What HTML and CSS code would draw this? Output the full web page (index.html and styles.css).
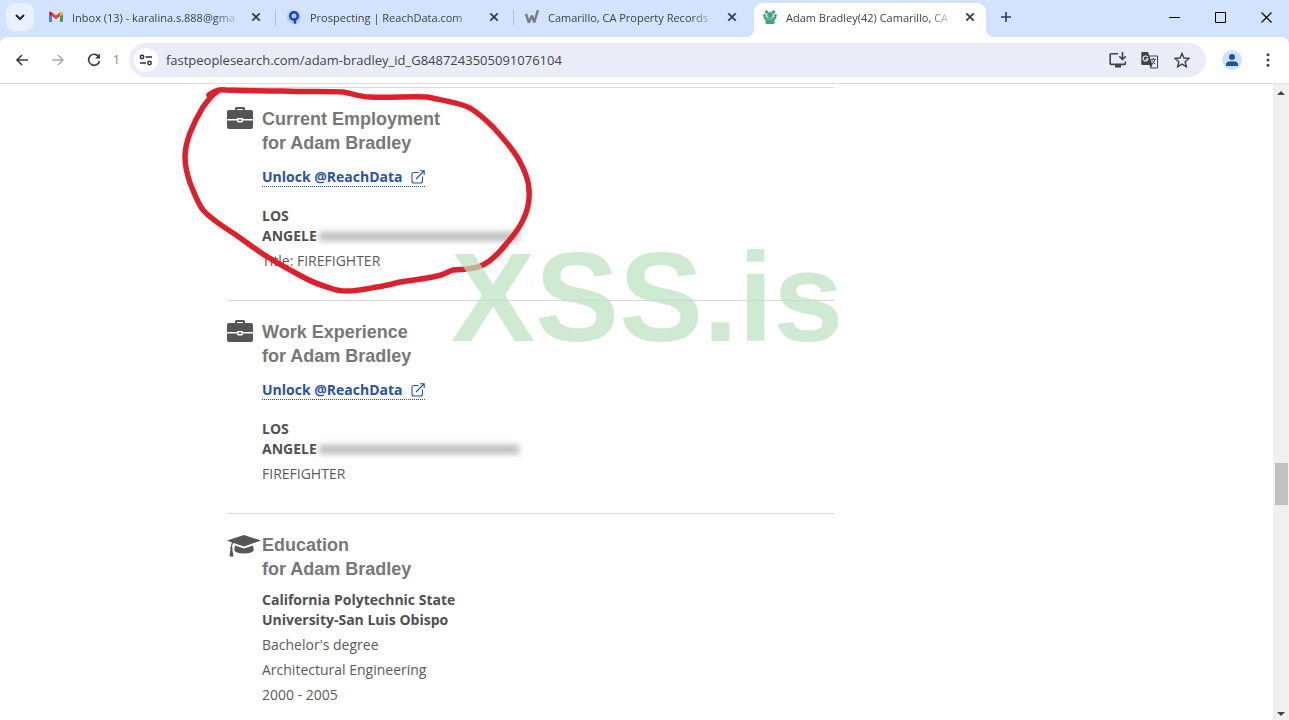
FILE: index.html
```html
<!DOCTYPE html>
<html lang="en">
<head>
<meta charset="utf-8">
<title>Adam Bradley(42) Camarillo, CA</title>
<link rel="stylesheet" href="styles.css">
</head>
<body>
<svg class="defs" width="0" height="0" aria-hidden="true">
  <symbol id="x" viewBox="0 0 10 10"><path d="M1.3 1.3l7.4 7.4M8.7 1.3L1.3 8.7" fill="none" stroke="currentColor" stroke-width="1.7"/></symbol>
  <symbol id="case" viewBox="0 0 26 22"><path fill="currentColor" fill-rule="evenodd" d="M8 3V1.500Q8 0 9.500 0h7Q18 0 18 1.500V3h6q2 0 2 2v7H16v-1h-6v1H0V5q0-2 2-2zM10 3h6V2h-6zM0 13.500h10V14q0 1.500 1.500 1.500h3Q16 15.500 16 14v-.5h10V20q0 2-2 2H2q-2 0-2-2zM11.500 12.500h3v1.500h-3z"/></symbol>
  <symbol id="ext" viewBox="0 0 14 14"><path d="M7.500 2.500H3Q1 2.500 1 4.500V11q0 2 2 2h6.500q2 0 2-2V6.500M5 9l8-8M9 .8h4.200V5" fill="none" stroke="currentColor" stroke-width="1.100"/></symbol>
</svg>
<header class="browser">
  <div class="tabbar">
    <button class="tab-search" aria-label="Search tabs"><svg width="10" height="7" viewBox="0 0 10 7"><path d="M1 1l4 4 4-4" fill="none" stroke="#1f2430" stroke-width="2"/></svg></button>
    <nav class="tabs">
      <div class="tab">
        <svg class="favicon" viewBox="0 0 14 14"><path fill="#4285f4" d="M0 3.500l3 2.200V12H1q-1 0-1-1z"/><path fill="#34a853" d="M11 5.700l3-2.200V11q0 1-1 1h-2z"/><path fill="#ea4335" d="M3 2.500l4 3 4-3v3.800L7 9.300 3 6.300z"/><path fill="#c5221f" d="M0 3.500Q0 1 2 1.700l1 .8v3.800L0 4.500z"/><path fill="#fbbc04" d="M14 3.500Q14 1 12 1.700l-1 .8v3.800l3-1.800z"/></svg>
        <a class="title" href="#">Inbox (13) - karalina.s.888@gma</a>
        <button class="close" aria-label="Close tab"><svg width="10" height="10"><use href="#x"/></svg></button>
      </div>
      <div class="tab">
        <svg class="favicon" viewBox="0 0 14 14"><circle cx="7" cy="7" r="7" fill="#a9cdf8"/><circle cx="7" cy="6" r="3.800" fill="none" stroke="#2049a5" stroke-width="2.600"/><path d="M8 8v5.700" stroke="#2049a5" stroke-width="2.400"/></svg>
        <a class="title" href="#">Prospecting | ReachData.com</a>
        <button class="close" aria-label="Close tab"><svg width="10" height="10"><use href="#x"/></svg></button>
      </div>
      <div class="tab">
        <svg class="favicon" viewBox="0 0 14 14"><path d="M1 4l2.800 8.500L7 5.500l2.200 7L13 0" fill="none" stroke="#777b84" stroke-width="2.400" stroke-linejoin="bevel"/></svg>
        <a class="title" href="#">Camarillo, CA Property Records</a>
        <button class="close" aria-label="Close tab"><svg width="10" height="10"><use href="#x"/></svg></button>
      </div>
      <div class="tab active">
        <svg class="favicon" viewBox="0 0 14 14" fill="#43a583"><circle cx="3.500" cy="2" r="1.800"/><circle cx="10.500" cy="2" r="1.800"/><circle cx="1.600" cy="5.500" r="1.600"/><circle cx="12.400" cy="5.500" r="1.600"/><circle cx="7" cy="4.800" r="2.900"/><path d="M1.500 6l3 1.500h5l3-1.500 1 2.500-2 1.500v3q0 1-1 1h-7q-1 0-1-1v-3l-2-1.500z"/><path d="M3.500 8.500q3.500 1.600 7 0" fill="none" stroke="#b5dfce" stroke-width=".6"/></svg>
        <a class="title" href="#">Adam Bradley(42) Camarillo, CA</a>
        <button class="close" aria-label="Close tab"><svg width="10" height="10"><use href="#x"/></svg></button>
      </div>
    </nav>
    <button class="new-tab" aria-label="New tab"><svg width="12" height="12" viewBox="0 0 12 12"><path d="M6 1v10M1 6h10" stroke="#33394a" stroke-width="1.600"/></svg></button>
    <div class="window-controls">
      <button aria-label="Minimize"><svg width="11" height="11" viewBox="0 0 11 11"><path d="M0 5.500h11" stroke="#000"/></svg></button>
      <button aria-label="Maximize"><svg width="11" height="11" viewBox="0 0 11 11"><path d="M.5 .5h10v10H.5z" fill="none" stroke="#000"/></svg></button>
      <button aria-label="Close"><svg width="11" height="11" viewBox="0 0 11 11"><path d="M.5 .5l10 10M10.500 .5l-10 10" stroke="#000" stroke-width="1.200"/></svg></button>
    </div>
  </div>
  <div class="toolbar">
    <button class="tool" aria-label="Back"><svg width="14" height="12" viewBox="0 0 14 12"><path d="M13 6H2M7 1L2 6l5 5" fill="none" stroke="#3c4043" stroke-width="1.700"/></svg></button>
    <button class="tool" aria-label="Forward"><svg width="14" height="12" viewBox="0 0 14 12"><path d="M1 6h11M7 1l5 5-5 5" fill="none" stroke="#a9abae" stroke-width="1.500"/></svg></button>
    <button class="tool" aria-label="Reload"><svg width="14" height="14" viewBox="0 0 14 14"><path d="M12 4.200A5.500 5.500 0 1 0 12.500 8" fill="none" stroke="#3c4043" stroke-width="1.700"/><path d="M13 .5v5H8z" fill="#3c4043"/></svg></button>
    <span class="count">1</span>
    <div class="omnibox">
      <button class="site-info" aria-label="Site information"><svg width="14" height="12" viewBox="0 0 14 12"><g fill="none" stroke="#2d3033" stroke-width="1.500"><circle cx="3" cy="3" r="1.700"/><path d="M6.500 3H13M1 9h6"/><circle cx="10.500" cy="9" r="1.700"/></g></svg></button>
      <input class="url" type="text" aria-label="Address" value="fastpeoplesearch.com/adam-bradley_id_G8487243505091076104">
      <button class="action" aria-label="Install"><svg width="18" height="16" viewBox="0 0 18 16"><path d="M9 1.800H2q-.8 0-.8.8v9q0 .8.8.8h13.500q.8 0 .8-.8V9.500" fill="none" stroke="#41454a" stroke-width="1.600"/><path d="M6 13h6v2.500H6z" fill="#41454a"/><path d="M13.500 0v7M10.300 4.300l3.200 3.200 3.200-3.200" fill="none" stroke="#41454a" stroke-width="1.600"/></svg></button>
      <button class="action" aria-label="Translate"><svg width="18" height="17" viewBox="0 0 18 17"><path d="M1.500 0H7l1.200 3.500H16q1 0 1 1V15.500q0 1-1 1H9.500L8.500 13H1.500q-1.200 0-1.200-1.200V1.200Q.3 0 1.500 0z" fill="#41454a"/><path d="M8.600 4.500H15.500q.5 0 .5.5v10q0 .5-.5.5H10l1.500-2.500z" fill="#eaedf7"/><path d="M6.800 5.300A2.500 2.500 0 1 0 7 7.200H4.800" fill="none" stroke="#eaedf7" stroke-width="1.200"/><path d="M10 7.300h5M12.300 6v1.300M14 7.500q-.8 3.200-3 4.500M11 8.500q1.200 2.300 3.200 3.600" fill="none" stroke="#41454a"/></svg></button>
      <button class="action" aria-label="Bookmark"><svg width="16" height="16" viewBox="0 0 16 16"><path d="M8 1.500l2 4.500 5 .5-3.800 3.300 1.100 4.900L8 12.100l-4.300 2.600 1.100-4.900L1 6.500 6 6z" fill="none" stroke="#41454a" stroke-width="1.500"/></svg></button>
    </div>
    <button class="profile" aria-label="Profile"><svg width="12" height="12" viewBox="0 0 12 12" fill="#1b55a5"><circle cx="6" cy="3" r="3"/><path d="M0 12V10q0-2.800 6-2.800T12 10v2z"/></svg></button>
    <button class="more" aria-label="Menu"><svg width="4" height="14" viewBox="0 0 4 14" fill="#41454a"><circle cx="2" cy="1.800" r="1.500"/><circle cx="2" cy="7" r="1.500"/><circle cx="2" cy="12.200" r="1.500"/></svg></button>
  </div>
</header>
<div class="viewport">
  <main class="page">
    <div class="details">
      <section class="record">
        <svg class="icon" viewBox="0 0 26 22"><use href="#case"/></svg>
        <div class="body">
          <h2>Current Employment<br>for Adam Bradley</h2>
          <a class="unlock" href="#">Unlock @ReachData <svg width="14" height="14"><use href="#ext"/></svg></a>
          <p class="name">LOS<br>ANGELE<span class="redacted"></span></p>
          <p class="line">Title: FIREFIGHTER</p>
        </div>
      </section>
      <section class="record">
        <svg class="icon" viewBox="0 0 26 22"><use href="#case"/></svg>
        <div class="body">
          <h2>Work Experience<br>for Adam Bradley</h2>
          <a class="unlock" href="#">Unlock @ReachData <svg width="14" height="14"><use href="#ext"/></svg></a>
          <p class="name">LOS<br>ANGELE<span class="redacted"></span></p>
          <p class="line">FIREFIGHTER</p>
        </div>
      </section>
      <section class="record education">
        <svg class="icon cap" viewBox="0 0 34 22"><path fill="currentColor" d="M0 5.500L17 0l17 5.500L17 11.500 6.500 8Q5 9 5 12q1 .8.300 2L6.500 21.500H2.500L3.500 14q-.8-1.200.3-2Q4 9 5 7.500zM8 10.500l9 3 9-3 .8 5q-2 3-9.800 3T7.200 15.500z"/></svg>
        <div class="body">
          <h2>Education<br>for Adam Bradley</h2>
          <p class="name">California Polytechnic State<br>University-San Luis Obispo</p>
          <p class="line">Bachelor's degree</p>
          <p class="line">Architectural Engineering</p>
          <p class="line">2000 - 2005</p>
        </div>
      </section>
      <svg class="scribble" width="360" height="220" viewBox="180 84 360 220" aria-hidden="true"><path d="M209 95C214 91 219 89 226 90C255 91 270 91 283 91C305 92 325 91 343 92C355 94 360 97 370 97C390 98 410 96 427 97C445 101 458 102 470 108C478 113 485 119 493 127C504 139 513 149 519 160C525 171 529 180 529 190C530 202 528 210 523 220C519 229 514 235 507 243C500 252 493 260 483 265C473 270 463 269 453 270C447 272 443 275 437 276C425 279 412 280 400 282C392 284 385 286 377 287C366 289 357 291 347 291C341 291 335 290 330 288C320 285 312 282 303 277C288 269 273 261 260 252C251 246 242 239 233 233C222 226 211 219 203 210C197 202 194 192 190 183C187 174 185 166 185 157C185 148 187 141 190 133C194 123 198 115 203 107C208 100 212 95 218 91" fill="none" stroke="#dc212c" stroke-width="5.500" stroke-linecap="round" stroke-linejoin="round"/></svg>
      <div class="watermark">XSS.is</div>
    </div>
  </main>
  <div class="scrollbar" aria-hidden="true">
    <svg width="8" height="4" viewBox="0 0 8 4"><path d="M0 4l4-4 4 4z" fill="#444"/></svg>
    <div class="track"><div class="thumb"></div></div>
    <svg width="8" height="4" viewBox="0 0 8 4"><path d="M0 0l4 4 4-4z" fill="#444"/></svg>
  </div>
</div>
</body>
</html>
```
FILE: styles.css
```css
* { box-sizing: border-box; }
body {
  margin: 0;
  height: 100vh;
  display: flex;
  flex-direction: column;
  overflow: hidden;
  background: #fff;
  color: #5a5a5a;
  font: 14px/20px "Open Sans", "Noto Sans", sans-serif;
}
.defs { position: absolute; }
svg { display: block; flex: none; }
button {
  display: flex;
  align-items: center;
  justify-content: center;
  flex: none;
  padding: 0;
  border: 0;
  background: none;
  color: #33394a;
}
.browser { flex: none; background: #d3e2fd; }
.tabbar { display: flex; height: 37px; padding-left: 6px; }
.tab-search {
  width: 28px;
  height: 28px;
  margin: 3px 4px 0 0;
  border-radius: 9px;
  background: #e9f0fe;
}
.tabs { display: flex; flex: 0 1 948px; min-width: 0; }
.tab {
  position: relative;
  display: flex;
  align-items: center;
  flex: 1 1 238px;
  min-width: 0;
  height: 34px;
  margin-top: 3px;
  padding: 0 12px 6px 11px;
}
.tab:not(.active)::after {
  content: "";
  position: absolute;
  right: 0;
  top: 7px;
  width: 1px;
  height: 15px;
  background: #a5bfe9;
}
.tab:nth-child(3)::after { display: none; }
.tab.active {
  background: #fff;
  border-radius: 9px 9px 0 0;
  padding: 0 8px 6px 9px;
  margin-left: 2px;
  flex-basis: 232px;
  flex-grow: 0;
}
.tab.active::before {
  content: "";
  position: absolute;
  bottom: 0;
  left: -8px;
  right: -8px;
  height: 8px;
  background:
    radial-gradient(circle at 0 0, transparent 8px, #fff 8px) left / 8px 8px no-repeat,
    radial-gradient(circle at 100% 0, transparent 8px, #fff 8px) right / 8px 8px no-repeat;
}
.favicon { width: 14px; height: 14px; margin-right: 9px; }
.title {
  flex: 1;
  min-width: 0;
  padding-top: 1px;
  overflow: hidden;
  white-space: nowrap;
  color: #3a414f;
  font-size: 11px;
  text-decoration: none;
  -webkit-mask-image: linear-gradient(90deg, #000 85%, transparent);
  mask-image: linear-gradient(90deg, #000 85%, transparent);
}
.close { width: 16px; height: 16px; margin-left: 8px; }
.new-tab { width: 28px; height: 28px; margin: 3px 0 0 6px; }
.window-controls { display: flex; flex: none; margin-left: auto; }
.window-controls button { width: 46px; height: 34px; }
.toolbar {
  display: flex;
  align-items: center;
  height: 47px;
  padding: 0 11px 0 4px;
  border-bottom: 1px solid #dde0e4;
  border-radius: 8px 8px 0 0;
  background: #fff;
}
.tool { width: 36px; height: 36px; }
.count { margin: 0 9px 0 1px; color: #8d8a5c; font-size: 12px; }
.omnibox {
  display: flex;
  align-items: center;
  flex: 1;
  min-width: 0;
  height: 34px;
  padding: 0 8px 0 5px;
  border-radius: 17px;
  background: #eaedf7;
}
.site-info { width: 24px; height: 24px; border-radius: 50%; background: #fff; }
.url {
  flex: 1;
  min-width: 0;
  margin-left: 8px;
  padding: 0;
  border: 0;
  outline: 0;
  background: none;
  color: #41454a;
  font: inherit;
  font-size: 13px;
}
.action { width: 32px; height: 32px; }
.profile { width: 20px; height: 20px; margin: 0 16px; border-radius: 50%; background: #cfe3fc; }
.more { width: 20px; height: 28px; }
.viewport { display: flex; flex: 1; min-height: 0; }
.page { flex: 1; min-width: 0; overflow: hidden; padding: 3px 0 0 227px; }
.details { position: relative; max-width: 607px; }
.record { display: flex; padding: 19px 0 27px; border-top: 1px solid #d9d9d9; }
.icon { width: 26px; height: 22px; margin-right: 9px; color: #555; }
.icon.cap { width: 34px; margin: 2px 1px 0 0; }
h2 { margin: 0; color: #777; font: bold 18px/24px "Liberation Sans", Arial, sans-serif; }
.unlock {
  display: inline-flex;
  align-items: center;
  gap: 8px;
  height: 20px;
  margin-top: 12px;
  border-bottom: 1px dotted #2a52a0;
  color: #2a52a0;
  font-weight: bold;
  text-decoration: none;
}
.name { margin: 19px 0 2px; color: #505050; font-weight: bold; }
.education .name { margin-top: 9px; }
.line { margin: 0; line-height: 25px; }
.redacted {
  display: inline-block;
  width: 200px;
  height: 9px;
  margin-left: 2px;
  background: #bbb;
  filter: blur(3px);
}
.scribble { position: absolute; left: -47px; top: -3px; }
.watermark {
  position: absolute;
  left: 224px;
  top: 138px;
  color: rgba(189, 226, 192, .72);
  font: bold 126px/146px "Liberation Sans", Arial, sans-serif;
  pointer-events: none;
}
.scrollbar {
  display: flex;
  flex-direction: column;
  align-items: center;
  flex: none;
  width: 16px;
  padding: 7px 0 4px;
  background: #f0f0f0;
}
.track { flex: 1; width: 13px; }
.thumb { height: 42px; margin-top: 368px; background: #c1c1c1; }
```
